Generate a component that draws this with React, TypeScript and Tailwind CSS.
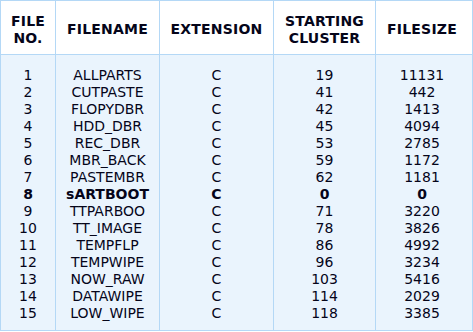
const rows = [
  ["1", "ALLPARTS", "C", "19", "11131"],
  ["2", "CUTPASTE", "C", "41", "442"],
  ["3", "FLOPYDBR", "C", "42", "1413"],
  ["4", "HDD_DBR", "C", "45", "4094"],
  ["5", "REC_DBR", "C", "53", "2785"],
  ["6", "MBR_BACK", "C", "59", "1172"],
  ["7", "PASTEMBR", "C", "62", "1181"],
  ["8", "sARTBOOT", "C", "0", "0"],
  ["9", "TTPARBOO", "C", "71", "3220"],
  ["10", "TT_IMAGE", "C", "78", "3826"],
  ["11", "TEMPFLP", "C", "86", "4992"],
  ["12", "TEMPWIPE", "C", "96", "3234"],
  ["13", "NOW_RAW", "C", "103", "5416"],
  ["14", "DATAWIPE", "C", "114", "2029"],
  ["15", "LOW_WIPE", "C", "118", "3385"],
];

const headers = [["FILE", "NO."], ["FILENAME"], ["EXTENSION"], ["STARTING", "CLUSTER"], ["FILESIZE"]];

const widths = ["w-[54px]", "w-[104px]", "w-[114px]", "w-[102px]", "w-[93px]"];

export default function App() {
  return (
    <div className="w-[473px] bg-white font-['DejaVu_Sans',Verdana,sans-serif] text-[14px] leading-[17px] text-[#05051a]">
      <div className="border border-[#b4d8f6]">
        {/* header */}
        <div className="flex h-[54px] border-b border-[#b4d8f6] bg-white">
          {headers.map((h, i) => (
            <div
              key={i}
              className={`${widths[i]} flex flex-col items-center justify-center pt-[4px] font-bold tracking-[0.2px] ${i > 0 ? "border-l border-[#b4d8f6]" : ""}`}
            >
              {h.map((line) => (
                <div key={line}>{line}</div>
              ))}
            </div>
          ))}
        </div>

        {/* body: one cell per column, lines stacked */}
        <div className="flex bg-[#eaf4fd]">
          {widths.map((w, c) => (
            <div
              key={c}
              className={`${w} flex flex-col items-center pt-[12px] pb-[8px] ${c > 0 ? "border-l border-[#b4d8f6]" : ""}`}
            >
              {rows.map((r, i) => (
                <div key={i} className={i === 7 ? "font-bold" : ""}>
                  {r[c]}
                </div>
              ))}
            </div>
          ))}
        </div>
      </div>
    </div>
  );
}
